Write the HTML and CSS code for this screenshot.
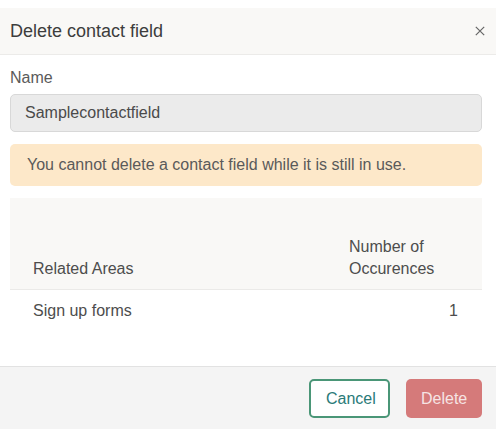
FILE: index.html
```html
<!DOCTYPE html>
<html lang="en">
<head>
    <meta charset="UTF-8">
    <meta name="viewport" content="width=device-width, initial-scale=1.0">
    <title>Delete contact field</title>
    <link rel="stylesheet" href="styles.css">
</head>
<body>
    <div class="modal">
        <div class="modal-header">
            <span class="modal-title">Delete contact field</span>
            <button class="close" aria-label="Close">
                <svg width="10" height="10" viewBox="0 0 10 10">
                    <path d="M0.8 0.8L9.2 9.2M9.2 0.8L0.8 9.2" stroke="#666" stroke-width="1.2" fill="none"/>
                </svg>
            </button>
        </div>
        <div class="modal-body">
            <label class="field-label" for="name">Name</label>
            <input type="text" id="name" class="field-input" value="Samplecontactfield" disabled>
            <div class="alert">You cannot delete a contact field while it is still in use.</div>
            <table class="usage">
                <thead>
                    <tr>
                        <th>Related Areas</th>
                        <th class="count-col">Number of<br>Occurences</th>
                    </tr>
                </thead>
                <tbody>
                    <tr>
                        <td>Sign up forms</td>
                        <td class="count">1</td>
                    </tr>
                </tbody>
            </table>
        </div>
        <div class="modal-footer">
            <button class="btn btn-cancel">Cancel</button>
            <button class="btn btn-delete">Delete</button>
        </div>
    </div>
</body>
</html>
```

FILE: styles.css
```css
body {
    margin: 0;
    padding-top: 8px;
    background: #fff;
    font-family: 'Liberation Sans', Arial, sans-serif;
    color: #4d4d4d;
}
.modal {
    width: 496px;
    height: 421px;
    display: flex;
    flex-direction: column;
}
.modal-header {
    height: 47px;
    box-sizing: border-box;
    display: flex;
    align-items: center;
    justify-content: space-between;
    padding: 0 11px 0 10px;
    background: #f9f8f6;
    border-bottom: 1px solid #ecebe9;
}
.modal-title {
    font-size: 18px;
    color: #3d3d3d;
}
.close {
    border: none;
    background: none;
    padding: 0;
    width: 10px;
    height: 10px;
    display: flex;
}
.modal-body {
    flex: 1;
    padding: 14px 14px 0 10px;
}
.field-label {
    display: block;
    font-size: 16px;
    line-height: 18px;
    color: #5a5a5a;
    margin-bottom: 7px;
}
.field-input {
    display: block;
    width: 100%;
    box-sizing: border-box;
    height: 38px;
    padding: 0 14px;
    font-family: inherit;
    font-size: 16px;
    color: #4a4a4a;
    background: #ebebeb;
    border: 1px solid #d8d8d8;
    border-radius: 5px;
}
.alert {
    margin-top: 12px;
    height: 42px;
    box-sizing: border-box;
    display: flex;
    align-items: center;
    padding: 0 17px;
    background: #fde8c9;
    border-radius: 5px;
    font-size: 16px;
    color: #5a5a5a;
}
.usage {
    margin-top: 12px;
    width: 100%;
    border-collapse: collapse;
    font-size: 16px;
}
.usage th {
    height: 91px;
    box-sizing: border-box;
    vertical-align: bottom;
    text-align: left;
    font-weight: normal;
    line-height: 22px;
    padding: 0 23px 9px;
    background: #f9f8f6;
    border-bottom: 1px solid #ebeae8;
}
.usage th.count-col {
    width: 156px;
    box-sizing: border-box;
}
.usage td {
    height: 42px;
    padding: 0 23px;
}
.usage td.count {
    text-align: right;
    padding-right: 24px;
}
.modal-footer {
    height: 63px;
    box-sizing: border-box;
    display: flex;
    justify-content: flex-end;
    align-items: flex-start;
    gap: 16px;
    padding: 12px 14px 0;
    background: #f4f4f4;
    border-top: 1px solid #e2e2e2;
}
.btn {
    height: 39px;
    box-sizing: border-box;
    padding: 0 15px;
    font-family: inherit;
    font-size: 16px;
    border-radius: 5px;
    cursor: pointer;
}
.btn-cancel {
    width: 81px;
    background: #fff;
    color: #2a7a78;
    border: 2px solid #4a9677;
}
.btn-delete {
    width: 76px;
    background: #d57a7a;
    color: #f6e4e4;
    border: none;
}
```
